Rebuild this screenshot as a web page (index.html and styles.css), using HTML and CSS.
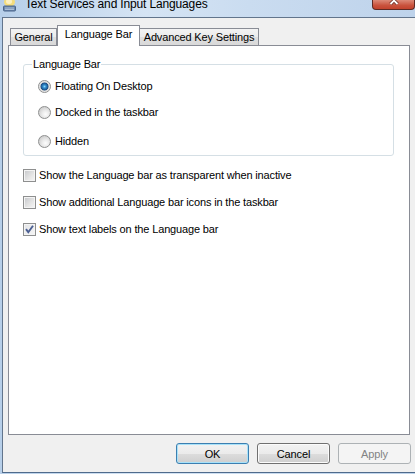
FILE: index.html
```html
<!DOCTYPE html>
<html>
	<head>
		<meta charset="UTF-8">
		<title>Text Services and Input Languages</title>
		<link rel="stylesheet" href="styles.css">
	</head>
	<body>
		<div class="window">
			<div class="titlebar">
				<svg class="app-icon" width="13" height="12" viewBox="0 0 13 12">
					<ellipse cx="6.5" cy="2" rx="5.5" ry="4.5" fill="#f4dc7c"/>
					<ellipse cx="6" cy="1.5" rx="3" ry="2.5" fill="#fbf0c2"/>
					<rect x="0.5" y="6" width="12" height="5" rx="1" fill="#6d88ad" stroke="#4a6489" stroke-width="1"/>
					<path d="M2 8h9M2 9.5h9" stroke="#b9cbe2" stroke-width="0.8"/>
				</svg>
				<span class="title">Text Services and Input Languages</span>
				<div class="close">
					<svg width="12" height="6" viewBox="0 0 12 6">
						<path d="M2.5 -3L9.5 4M9.5 -3L2.5 4" stroke="#6a2a22" stroke-width="3.4"/>
						<path d="M2.5 -3L9.5 4M9.5 -3L2.5 4" stroke="#fff" stroke-width="1.8"/>
					</svg>
				</div>
			</div>
			<div class="client">
				<div class="tabs">
					<div class="tab general">General</div>
					<div class="tab active">Language Bar</div>
					<div class="tab advanced">Advanced Key Settings</div>
				</div>
				<div class="panel">
					<fieldset class="group">
						<legend>Language Bar</legend>
						<label class="radio"><span class="dot on"></span>Floating On Desktop</label>
						<label class="radio"><span class="dot"></span>Docked in the taskbar</label>
						<label class="radio last"><span class="dot"></span>Hidden</label>
					</fieldset>
					<label class="check first"><span class="box"></span>Show the Language bar as transparent when inactive</label>
					<label class="check"><span class="box"></span>Show additional Language bar icons in the taskbar</label>
					<label class="check"><span class="box on">
						<svg width="11" height="11" viewBox="0 0 11 11"><path d="M2 5.2L4.3 8.2L9 1.8" fill="none" stroke="#4b5f92" stroke-width="1.9"/></svg>
					</span>Show text labels on the Language bar</label>
				</div>
				<div class="buttons">
					<button class="btn default">OK</button>
					<button class="btn">Cancel</button>
					<button class="btn" disabled>Apply</button>
				</div>
			</div>
		</div>
	</body>
</html>
```

FILE: styles.css
```css
*{margin: 0;padding: 0;}
body{
	font-family: "Liberation Sans", Arial, sans-serif;
	font-size: 11px;
	letter-spacing: -0.15px;
	color: #000;
	overflow: hidden;
}
.window{
	width: 415px;
	height: 474px;
	display: flex;
	flex-direction: column;
	background: linear-gradient(to right, #b7cfe9, #d5e4f4 35%, #cadcf0 60%, #bed3eb);
}
.titlebar{
	height: 17px;
	display: flex;
	align-items: flex-start;
	overflow: hidden;
	flex-shrink: 0;
}
.app-icon{
	margin-left: 3px;
	flex-shrink: 0;
}
.title{
	font-size: 12px;
	line-height: 12px;
	margin-top: -2px;
	margin-left: 9px;
	white-space: nowrap;
}
.close{
	margin-left: auto;
	width: 43px;
	height: 10px;
	box-sizing: border-box;
	border: 1px solid #5e2a24;
	border-top: 0;
	border-radius: 0 0 4px 4px;
	background: linear-gradient(#dc8a78, #c9523d 60%, #c2432d);
	display: flex;
	justify-content: center;
	align-items: flex-start;
	flex-shrink: 0;
}
.client{
	flex: 1;
	margin: 0 0 1px 2px;
	background: #f0f0f0;
	border-top: 1px solid #62758c;
	border-left: 1px solid #62758c;
	border-bottom: 1px solid #4f6b8c;
	padding: 7px 0 8px 5px;
	display: flex;
	flex-direction: column;
}
.tabs{
	display: flex;
	align-items: flex-end;
	height: 20px;
	margin-left: 2px;
}
.tab{
	height: 17px;
	box-sizing: border-box;
	border: 1px solid #898c95;
	border-bottom: 0;
	background: linear-gradient(#f3f3f3, #ebebeb 50%, #dfdfdf 50%, #d9d9d9);
	text-align: center;
	padding-top: 1px;
	line-height: 15px;
	white-space: nowrap;
}
.general{width: 47px;}
.active{
	width: 83px;
	height: 21px;
	margin-bottom: -1px;
	background: #fff;
	position: relative;
	z-index: 1;
}
.advanced{
	width: 119px;
	border-left: 0;
}
.panel{
	width: 402px;
	height: 390px;
	box-sizing: border-box;
	border: 1px solid #898c95;
	background: #fff;
	padding: 12px 15px 0 14px;
}
.group{
	border: 1px solid #d5dfe5;
	border-radius: 3px;
	padding: 0 14px 7px;
}
.group legend{
	line-height: 13px;
	padding: 0 1px;
	margin-left: -6px;
}
.radio,.check{
	display: flex;
	align-items: center;
	height: 13px;
	line-height: 13px;
	white-space: nowrap;
}
.radio{margin-top: 13px;}
.radio.last{margin-top: 16px;}
.group legend + .radio{margin-top: 9px;}
.dot{
	width: 13px;
	height: 13px;
	box-sizing: border-box;
	border: 1px solid #8e8f8f;
	border-radius: 50%;
	margin-right: 4px;
	background: radial-gradient(circle at 60% 65%, #fdfdfd 0, #ebebeb 35%, #cfcfcf 75%);
}
.dot.on{
	background: radial-gradient(circle, #8ad6fb 0, #2e8bcc 1.6px, #1b4e86 3.6px, #d2d2d2 4.3px, #efefef 5.5px);
}
.check{margin-top: 14px;}
.check.first{margin-top: 13px;}
.box{
	width: 13px;
	height: 13px;
	box-sizing: border-box;
	border: 1px solid #8e8f8f;
	margin-right: 3px;
	background: linear-gradient(135deg, #c4c6c9, #e6e6e6 60%, #f6f6f6);
	box-shadow: inset 0 0 0 1px #f4f4f4;
	display: flex;
	align-items: center;
	justify-content: center;
}
.box.on{
	background: linear-gradient(135deg, #e2e3e6, #f6f6f6);
}
.buttons{
	display: flex;
	justify-content: flex-end;
	gap: 8px;
	margin-top: 8px;
	padding-right: 4px;
}
.btn{
	width: 73px;
	height: 21px;
	font-family: "Liberation Sans", Arial, sans-serif;
	font-size: 11px;
	letter-spacing: -0.15px;
	color: #000;
	border: 1px solid #707070;
	border-radius: 3px;
	background: linear-gradient(#f2f2f2, #ebebeb 50%, #dddddd 50%, #cfcfcf);
	box-shadow: inset 0 0 0 1px #fbfbfb;
	outline: none;
}
.btn.default{
	border-color: #3c7fb1;
	box-shadow: inset 0 0 0 1px #a9e2f9;
}
.btn:disabled{
	border-color: #adb2b5;
	background: #f4f4f4;
	box-shadow: none;
	color: #838383;
}
```
